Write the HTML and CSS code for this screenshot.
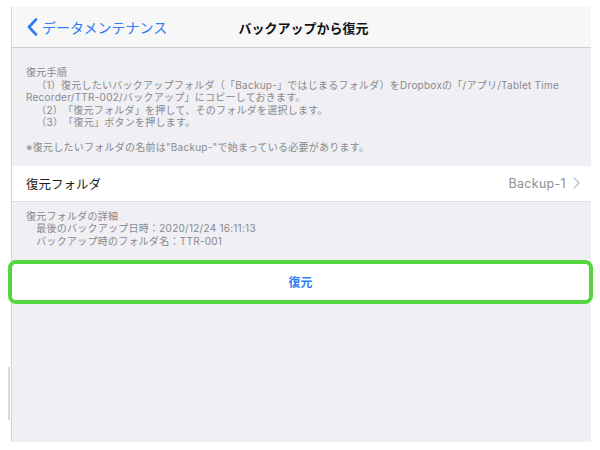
FILE: index.html
```html
<!DOCTYPE html>
<html lang="ja">
<head>
<meta charset="utf-8">
<link rel="stylesheet" href="styles.css">
</head>
<body>
<div class="page">
  <div class="gutter"><div class="scrollmark"></div></div>
  <div class="panel">
    <div class="nav">
      <div class="back">
        <svg class="back-icon" width="11" height="18" viewBox="0 0 11 18"><path d="M9 1.5 L2 9 L9 16.5" fill="none" stroke="#2e7cf6" stroke-width="2.6" stroke-linecap="round" stroke-linejoin="round"/></svg>
        <span>データメンテナンス</span>
      </div>
      <div class="title">バックアップから復元</div>
      <div class="spacer"></div>
    </div>
    <div class="notes">
      <div class="line">復元手順</div>
      <div class="line">　（1）復元したいバックアップフォルダ（「Backup-」ではじまるフォルダ）をDropboxの「/アプリ/Tablet Time</div>
      <div class="line">Recorder/TTR-002/バックアップ」にコピーしておきます。</div>
      <div class="line">　（2）「復元フォルダ」を押して、そのフォルダを選択します。</div>
      <div class="line">　（3）「復元」ボタンを押します。</div>
      <div class="line">&nbsp;</div>
      <div class="line">※復元したいフォルダの名前は"Backup-"で始まっている必要があります。</div>
    </div>
    <div class="row">
      <span class="row-label">復元フォルダ</span>
      <span class="row-value">Backup-1
        <svg class="chev" width="7" height="12" viewBox="0 0 7 12"><path d="M1 1 L6 6 L1 11" fill="none" stroke="#c4c4c8" stroke-width="1.5" stroke-linecap="round" stroke-linejoin="round"/></svg>
      </span>
    </div>
    <div class="details">
      <div class="line">復元フォルダの詳細</div>
      <div class="line">　最後のバックアップ日時：2020/12/24 16:11:13</div>
      <div class="line">　バックアップ時のフォルダ名：TTR-001</div>
    </div>
    <div class="restore">復元</div>
  </div>
</div>
</body>
</html>
```
FILE: styles.css
```css
html, body {
  margin: 0;
  padding: 0;
  background: #ffffff;
  font-family: Inter, "Noto Sans CJK JP", sans-serif;
  text-spacing-trim: space-all;
}
.page {
  display: flex;
  height: 450px;
  padding-top: 7px;
  box-sizing: border-box;
}
.gutter {
  width: 11px;
  flex: none;
  display: flex;
  justify-content: flex-end;
}
.scrollmark {
  width: 2px;
  height: 53px;
  margin-top: 360px;
  margin-right: 1px;
  background: #d8d8d8;
}
.panel {
  width: 580px;
  height: 435px;
  flex: none;
  background: #efeff4;
  border-left: 1px solid #d4d4d8;
  box-sizing: border-box;
  display: flex;
  flex-direction: column;
}
.nav {
  height: 41px;
  flex: none;
  box-sizing: border-box;
  background: #f7f7f8;
  border-bottom: 1px solid #cfcfd4;
  display: grid;
  grid-template-columns: 1fr auto 1fr;
  align-items: center;
  padding: 0 15px;
}
.back {
  display: flex;
  align-items: center;
  color: #2e7cf6;
  font-size: 14px;
  gap: 4px;
}
.title {
  font-size: 13px;
  font-weight: bold;
  color: #111;
  padding-left: 4px;
}
.notes {
  padding: 18px 14px 0 14px;
  font-size: 10px;
  line-height: 12.5px;
  letter-spacing: 0.25px;
  color: #89898d;
}
.line {
  white-space: nowrap;
}
.row {
  margin-top: 12px;
  height: 36px;
  flex: none;
  box-sizing: border-box;
  background: #ffffff;
  border-bottom: 1px solid #dedee3;
  display: flex;
  align-items: center;
  justify-content: space-between;
  padding: 0 11px 0 14px;
}
.row-label {
  font-size: 12.5px;
  color: #1c1c1e;
}
.row-value {
  font-size: 12.5px;
  letter-spacing: 0.3px;
  color: #8e8e93;
  display: flex;
  align-items: center;
  gap: 7px;
}
.details {
  padding: 8px 14px 0 14px;
  font-size: 10px;
  line-height: 12.5px;
  letter-spacing: 0.25px;
  color: #89898d;
}
.restore {
  margin: 12.5px -2px 0 -4px;
  height: 44px;
  flex: none;
  box-sizing: border-box;
  border: 4px solid #55d63f;
  border-radius: 8px;
  background: #ffffff;
  display: flex;
  align-items: center;
  justify-content: center;
  font-size: 12px;
  font-weight: bold;
  color: #2e7cf6;
}
```
